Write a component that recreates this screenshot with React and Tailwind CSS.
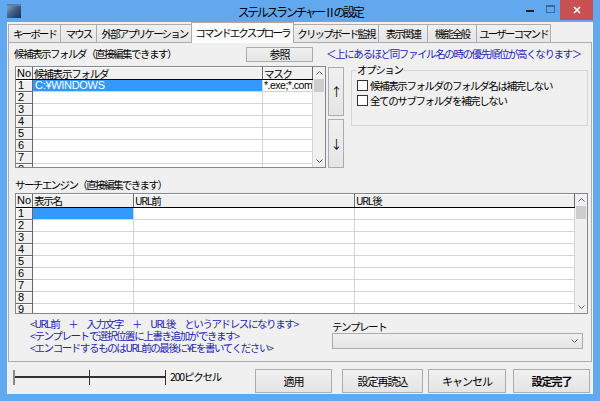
import React from "react";

const JP = "font-['Noto_Sans_CJK_JP',sans-serif]";

function Chevron({ up }) {
  return (
    <svg width="7" height="4" viewBox="0 0 7 4">
      <polyline
        points={up ? "0.5,3.5 3.5,0.5 6.5,3.5" : "0.5,0.5 3.5,3.5 6.5,0.5"}
        fill="none"
        stroke="#606060"
        strokeWidth="1"
      />
    </svg>
  );
}

function Scrollbar() {
  return (
    <div className="w-[12px] flex-none flex flex-col bg-[#f0f0f0]">
      <div className="h-[12px] flex items-center justify-center">
        <Chevron up />
      </div>
      <div className="h-[13px] bg-[#cdcdcd] mx-[1px]" />
      <div className="flex-1" />
      <div className="h-[12px] flex items-center justify-center">
        <Chevron />
      </div>
    </div>
  );
}

function Grid({ className, headClass, cols, headers, nrows, cell }) {
  const rows = [];
  for (let r = 1; r <= nrows; r++) {
    rows.push(
      <div key={r} className="flex flex-none h-[12px]">
        <div className="w-[17px] flex-none bg-[#f0f0f0] border-r border-b border-[#696969] shadow-[inset_1px_1px_0_#fff] text-[11px] leading-[11px] pl-[2px] overflow-hidden font-['Liberation_Sans',sans-serif]">
          {r}
        </div>
        {cols.map((c, i) => cell(r, i, c))}
      </div>
    );
  }
  return (
    <div className={`flex border border-[#828790] bg-white overflow-hidden ${className}`}>
      <div className="flex-1 flex flex-col overflow-hidden">
        <div className={`flex flex-none border-b border-black bg-[#f0f0f0] ${headClass}`}>
          <div className="w-[17px] flex-none border-r border-[#696969] shadow-[inset_1px_1px_0_#fff] text-[11px] leading-[11px] pl-[1px] pt-[1px] overflow-hidden font-['Liberation_Sans',sans-serif]">
            No
          </div>
          {headers.map((h, i) => (
            <div
              key={i}
              className={`${cols[i]} flex-none border-r border-[#696969] shadow-[inset_1px_1px_0_#fff] text-[10.5px] leading-[11px] pl-[1px] pt-[1px] whitespace-nowrap overflow-hidden tracking-[-1.2px]`}
            >
              {h}
            </div>
          ))}
        </div>
        {rows}
      </div>
      <Scrollbar />
    </div>
  );
}

function Btn({ className = "", children }) {
  return (
    <div
      className={`flex-none flex items-center justify-center border border-[#acacac] bg-linear-to-b from-[#f0f0f0] to-[#e5e5e5] text-[11px] tracking-[-1px] ${className}`}
    >
      {children}
    </div>
  );
}

function Tab({ w, label, active }) {
  if (active) {
    return (
      <div
        className={`${w} flex-none h-[21px] -mb-[1px] -mx-[1px] relative z-10 bg-[#fcfcfc] border border-b-0 border-[#acacac] flex items-center justify-center text-[10.5px] tracking-[-1.9px] whitespace-nowrap`}
      >
        {label}
      </div>
    );
  }
  return (
    <div
      className={`${w} flex-none h-[18px] bg-linear-to-b from-[#f0f0f0] to-[#e5e5e5] border border-b-0 border-r-0 border-[#acacac] last:border-r flex items-center justify-center text-[10.5px] tracking-[-1.9px] whitespace-nowrap`}
    >
      {label}
    </div>
  );
}

function Check({ label }) {
  return (
    <div className="flex items-center h-[13px]">
      <div className="w-[11px] h-[11px] border border-[#333] bg-white flex-none" />
      <span className="ml-[2px] text-[10.5px] leading-[13px] tracking-[-1.4px] whitespace-nowrap">{label}</span>
    </div>
  );
}

export default function App() {
  const cell1 = (r, i, c) => {
    if (r === 1 && i === 0)
      return (
        <div key={i} className={`${c} flex-none bg-[#3399ff] border-r border-b border-[#d4d4d4] text-white text-[11px] leading-[11px] pl-[2px] font-['Liberation_Sans',sans-serif] tracking-[-0.3px]`}>
          C:¥WINDOWS
        </div>
      );
    if (r === 1 && i === 1)
      return (
        <div key={i} className={`${c} flex-none border-r border-b border-[#d4d4d4] text-[10.5px] leading-[11px] pl-[1px] whitespace-nowrap overflow-hidden font-['Liberation_Sans',sans-serif] tracking-[-0.5px]`}>
          *.exe;*.com
        </div>
      );
    return <div key={i} className={`${c} flex-none border-r border-b border-[#d4d4d4]`} />;
  };
  const cell2 = (r, i, c) => {
    if (r === 1 && i === 0)
      return <div key={i} className={`${c} flex-none bg-[#3399ff] border-r border-b border-[#d4d4d4]`} />;
    return <div key={i} className={`${c} flex-none border-r border-b border-[#d4d4d4]`} />;
  };

  return (
    <div className={`w-[600px] h-[401px] bg-[#62a8ef] flex flex-col overflow-hidden text-black ${JP}`}>
      {/* title bar */}
      <div className="h-[22px] flex-none grid grid-cols-[1fr_auto_1fr] items-start">
        <div className="pl-[7px] pt-[4px]">
          <svg width="14" height="14" viewBox="0 0 14 14">
            <defs>
              <linearGradient id="ic" x1="0" y1="0" x2="1" y2="1">
                <stop offset="0" stopColor="#8fb0c8" />
                <stop offset="0.5" stopColor="#3d5f86" />
                <stop offset="1" stopColor="#1b2f55" />
              </linearGradient>
            </defs>
            <rect x="0" y="0" width="14" height="14" fill="url(#ic)" />
            <rect x="0" y="0" width="14" height="2" fill="#5b7fa6" />
          </svg>
        </div>
        <div className="text-[12px] leading-[22px] tracking-[-2.4px] pt-[1px]">ステルスランチャーⅡの設定</div>
        <div className="flex justify-end items-start pr-[7px]">
          <div className="w-[20px] h-[20px] flex items-center justify-center">
            <div className="w-[8px] h-[2px] bg-[#222] mt-[2px]" />
          </div>
          <div className="w-[20px] h-[20px] flex items-center justify-center">
            <div className="w-[9px] h-[8px] border border-[#3a6a9a] border-t-2 -mt-[3px]" />
          </div>
          <div className="w-[33px] h-[20px] bg-[#c75050] flex items-center justify-center">
            <svg width="8" height="8" viewBox="0 0 8 8">
              <path d="M1 1 L7 7 M7 1 L1 7" stroke="#fff" strokeWidth="1.6" />
            </svg>
          </div>
        </div>
      </div>

      {/* client */}
      <div className="mx-[7px] mb-[7px] flex-1 bg-[#f0f0f0] flex flex-col">
        {/* tabs */}
        <div className="h-[20px] flex-none flex items-end pl-[1px]">
          <Tab w="w-[52px]" label="キーボード" />
          <Tab w="w-[36px]" label="マウス" />
          <Tab w="w-[96px]" label="外部アプリケーション" />
          <Tab w="w-[103px]" label="コマンドエクスプローラ" active />
          <Tab w="w-[85px]" label="クリップボード監視" />
          <Tab w="w-[49px]" label="表示関連" />
          <Tab w="w-[49px]" label="機能全般" />
          <Tab w="w-[75px]" label="ユーザーコマンド" />
        </div>

        {/* panel */}
        <div className="h-[320px] flex-none ml-[1px] mr-[1px] border border-[#acacac] bg-[#f0f0f0] flex flex-col pl-[6px] pt-[3px]">
          {/* row 1 */}
          <div className="flex items-center h-[16px]">
            <div className="w-[231px] flex-none text-[10.5px] tracking-[-1.5px] -ml-[1px] whitespace-nowrap">候補表示フォルダ（直接編集できます）</div>
            <Btn className="w-[67px] h-[15px] ml-[1px]">参照</Btn>
            <div className="ml-[13px] text-[10.5px] tracking-[-1.4px] text-[#2424b0] whitespace-nowrap">＜上にあるほど同ファイル名の時の優先順位が高くなります＞</div>
          </div>

          {/* row 2 */}
          <div className="flex items-start mt-[4px]">
            <Grid
              className="w-[311px] h-[102px] flex-none"
              headClass="h-[13px]"
              cols={["w-[230px]", "w-[50px]"]}
              headers={["候補表示フォルダ", "マスク"]}
              nrows={8}
              cell={cell1}
            />
            <div className="flex flex-col ml-[2px] mt-[1px] gap-[3px]">
              <Btn className="w-[16px] h-[49px] text-[12px]">↑</Btn>
              <Btn className="w-[16px] h-[49px] text-[12px]">↓</Btn>
            </div>
            <div className="relative ml-[7px] mt-[4px] w-[237px] h-[56px] border border-[#d5d5d5] pl-[5px] pt-[8px] flex flex-col gap-[2px]">
              <span className="absolute -top-[7px] left-[4px] px-[1px] bg-[#f0f0f0] text-[10.5px] leading-[12px] tracking-[-1.4px]">オプション</span>
              <Check label="候補表示フォルダのフォルダ名は補完しない" />
              <Check label="全てのサブフォルダを補完しない" />
            </div>
          </div>

          {/* search engine label */}
          <div className="mt-[11px] h-[12px] text-[10.5px] leading-[12px] tracking-[-1.6px] whitespace-nowrap">サーチエンジン（直接編集できます）</div>

          <Grid
            className="w-[573px] h-[121px] flex-none mt-[2px]"
            headClass="h-[14px]"
            cols={["w-[101px]", "w-[221px]", "w-[220px]"]}
            headers={["表示名", "URL前", "URL後"]}
            nrows={9}
            cell={cell2}
          />

          {/* bottom of panel */}
          <div className="flex items-start">
            <div className="ml-[15px] w-[302px] flex-none mt-[4px] text-[10.5px] leading-[12px] tracking-[-1.4px] text-[#2424b0] whitespace-nowrap">
              <div>&lt;URL前　＋　入力文字　＋　URL後　というアドレスになります&gt;</div>
              <div>&lt;テンプレートで選択位置に上書き追加ができます&gt;</div>
              <div>&lt;エンコードするものはURL前の最後に¥Eを書いてください&gt;</div>
            </div>
            <div className="w-[251px] flex-none mt-[7px]">
              <div className="h-[12px] text-[10.5px] leading-[12px] tracking-[-1.4px]">テンプレート</div>
              <div className="h-[16px] border border-[#acacac] bg-linear-to-b from-[#f0f0f0] to-[#e5e5e5] flex items-center justify-end pr-[4px]">
                <Chevron />
              </div>
            </div>
          </div>
        </div>

        {/* bottom bar */}
        <div className="flex-1 flex items-start pt-[7px]">
          <div className="ml-[6px] w-[153px] h-[16px] flex-none flex items-center relative">
            <div className="w-[2px] h-[15px] bg-[#8a8a8a] flex-none" />
            <div className="w-[74px] h-[2px] bg-[#333] flex-none" />
            <div className="w-[1px] h-[15px] bg-[#333] flex-none" />
            <div className="w-[75px] h-[2px] bg-[#333] flex-none" />
            <div className="w-[1px] h-[15px] bg-[#333] flex-none" />
          </div>
          <div className="ml-[4px] h-[16px] text-[10.5px] leading-[16px] tracking-[-1.2px] whitespace-nowrap">200ピクセル</div>
          <Btn className="ml-[34px] w-[77px] h-[24px]">適用</Btn>
          <Btn className="ml-[10px] w-[81px] h-[24px]">設定再読込</Btn>
          <Btn className="ml-[5px] w-[78px] h-[24px]">キャンセル</Btn>
          <Btn className="ml-[7px] w-[77px] h-[24px] font-bold">設定完了</Btn>
        </div>
      </div>
    </div>
  );
}
